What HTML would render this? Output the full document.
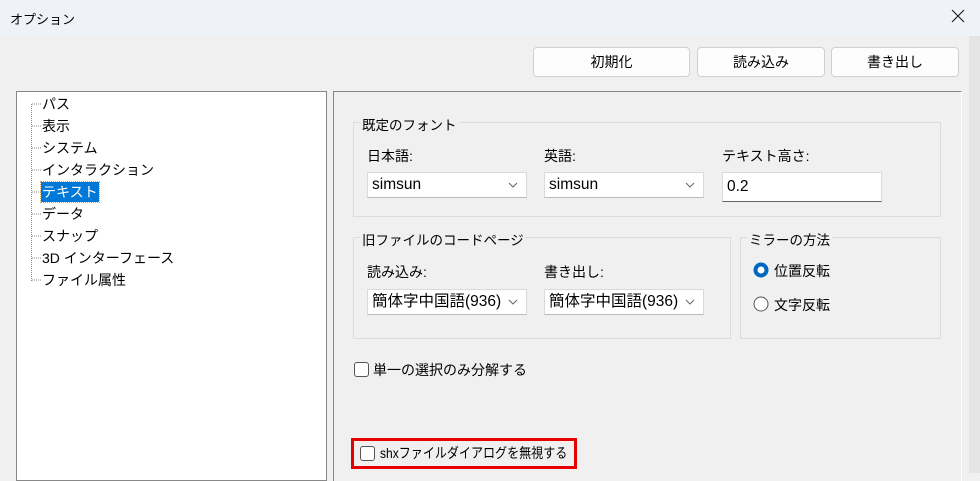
<!DOCTYPE html>
<html><head><meta charset="utf-8"><style>
*{box-sizing:border-box;margin:0;padding:0}
body{width:980px;height:473px;overflow:hidden;background:#f0f0f0;font-family:"Liberation Sans","Noto Sans CJK JP",sans-serif;font-size:14px;color:#000;position:relative}
.a{position:absolute}
.title{left:0;top:0;width:980px;height:36px;background:#eff2f8}
.btn{background:#fdfdfd;border:1px solid #d0d0d0;border-radius:4px;text-align:center;line-height:28px;height:30px;top:47px}
.grp{border:1px solid #dcdcdc}
.lg{background:#f0f0f0;padding:0 2px;font-size:13.5px}
.cb{background:#fff;border:1px solid #dadada;border-bottom-color:#bbb;height:26px;line-height:24px;padding-left:4px;font-size:15.5px}
.cb svg{position:absolute;right:8px;top:9px}
.tree div{position:absolute;left:42px;font-size:14px;height:20px;line-height:20px}
.chk{width:15px;height:15px;border:1px solid #555;border-radius:3px;background:#fff}
</style></head><body>
<div class="a title"></div>
<div class="a" style="left:10px;top:9px;font-size:13px">オプション</div>
<svg class="a" style="left:951px;top:9px" width="14" height="14"><path d="M1 1L13 13M13 1L1 13" stroke="#222" stroke-width="1.2"/></svg>
<div class="a" style="left:969px;top:36px;width:11px;height:437px;background:#e4e4e4"></div>
<div class="a btn" style="left:533px;width:157px">初期化</div>
<div class="a btn" style="left:697px;width:128px">読み込み</div>
<div class="a btn" style="left:831px;width:128px">書き出し</div>
<div class="a tree" style="left:16px;top:91px;width:311px;height:390px;background:#fff;border:1px solid #888">
<svg class="a" style="left:0;top:0" width="40" height="200"><path d="M14.5 12V189M15 12H24M15 34H24M15 56H24M15 78H24M15 100H24M15 122H24M15 144H24M15 166H24M15 188H24" stroke="#888" stroke-dasharray="1 1" fill="none"/></svg>
<div style="left:25px;top:2px">パス</div>
<div style="left:25px;top:24px">表示</div>
<div style="left:25px;top:46px">システム</div>
<div style="left:25px;top:68px">インタラクション</div>
<div style="left:24px;top:90px;background:#0078d7;color:#fff;padding:0 1px;outline:1px dotted #e0a040">テキスト</div>
<div style="left:25px;top:112px">データ</div>
<div style="left:25px;top:134px">スナップ</div>
<div style="left:25px;top:156px">3D インターフェース</div>
<div style="left:25px;top:178px">ファイル属性</div>
</div>
<div class="a" style="left:333px;top:91px;width:629px;height:390px;border-left:1px solid #888;border-top:1px solid #888;border-right:1px solid #fff"></div>
<div class="a grp" style="left:353px;top:122px;width:588px;height:95px"></div>
<div class="a lg" style="left:360px;top:114px">既定のフォント</div>
<div class="a" style="left:367px;top:146px">日本語:</div>
<div class="a" style="left:544px;top:146px">英語:</div>
<div class="a" style="left:722px;top:146px">テキスト高さ:</div>
<div class="a cb" style="left:367px;top:172px;width:160px">simsun<svg width="10" height="6"><path d="M1 1L5 5L9 1" stroke="#666" fill="none"/></svg></div>
<div class="a cb" style="left:544px;top:172px;width:160px">simsun<svg width="10" height="6"><path d="M1 1L5 5L9 1" stroke="#666" fill="none"/></svg></div>
<div class="a cb" style="left:722px;top:172px;width:160px;height:30px;line-height:28px;border-bottom:1px solid #666">0.2</div>
<div class="a grp" style="left:353px;top:237px;width:378px;height:102px"></div>
<div class="a lg" style="left:360px;top:229px">旧ファイルのコードページ</div>
<div class="a" style="left:367px;top:262px">読み込み:</div>
<div class="a" style="left:544px;top:262px">書き出し:</div>
<div class="a cb" style="left:367px;top:289px;width:160px">簡体字中国語(936)<svg width="10" height="6"><path d="M1 1L5 5L9 1" stroke="#666" fill="none"/></svg></div>
<div class="a cb" style="left:544px;top:289px;width:160px">簡体字中国語(936)<svg width="10" height="6"><path d="M1 1L5 5L9 1" stroke="#666" fill="none"/></svg></div>
<div class="a grp" style="left:740px;top:237px;width:201px;height:102px"></div>
<div class="a lg" style="left:747px;top:229px">ミラーの方法</div>
<svg class="a" style="left:753px;top:262px" width="16" height="16"><circle cx="8" cy="8" r="7.5" fill="#0067c0"/><circle cx="8" cy="8" r="3.5" fill="#fff"/></svg>
<div class="a" style="left:774px;top:261px">位置反転</div>
<svg class="a" style="left:753px;top:296px" width="16" height="16"><circle cx="8" cy="8" r="7" fill="#fff" stroke="#555"/></svg>
<div class="a" style="left:774px;top:295px">文字反転</div>
<div class="a chk" style="left:354px;top:362px"></div>
<div class="a" style="left:373px;top:360px">単一の選択のみ分解する</div>
<div class="a" style="left:351px;top:438px;width:226px;height:31px;border:3px solid #e60000"></div>
<div class="a chk" style="left:360px;top:446px"></div>
<div class="a" style="left:380px;top:443px;transform:scaleX(0.86);transform-origin:0 0;white-space:nowrap">shxファイルダイアログを無視する</div>
</body></html>
